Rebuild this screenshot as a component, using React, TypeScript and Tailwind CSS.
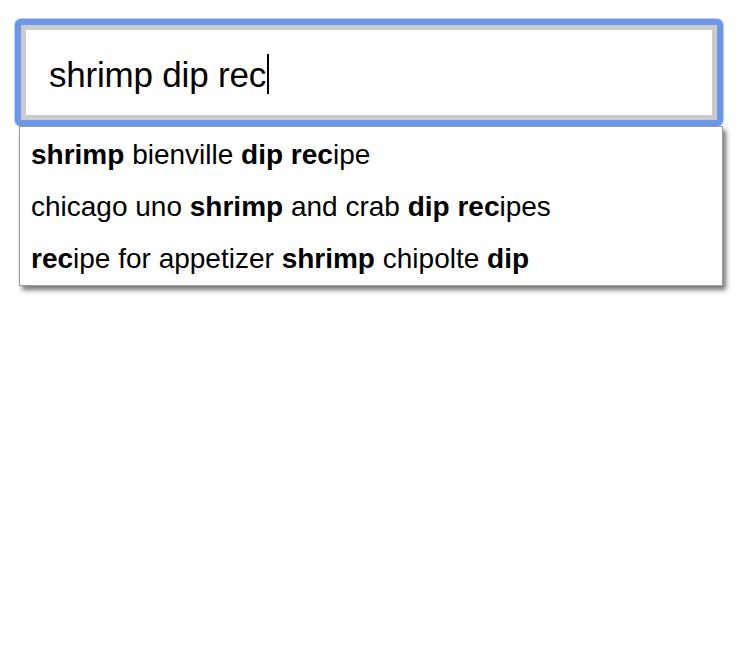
import React from 'react'

type Part = { t: string; b?: boolean }

const suggestions: Part[][] = [
  [{ t: 'shrimp', b: true }, { t: ' bienville ' }, { t: 'dip rec', b: true }, { t: 'ipe' }],
  [{ t: 'chicago uno ' }, { t: 'shrimp', b: true }, { t: ' and crab ' }, { t: 'dip rec', b: true }, { t: 'ipes' }],
  [{ t: 'rec', b: true }, { t: 'ipe for appetizer ' }, { t: 'shrimp', b: true }, { t: ' chipolte ' }, { t: 'dip', b: true }],
]

const App = () => {
  return (
    <div className="min-h-[668px] w-[744px] bg-white pl-[15px] pt-[19px] font-['Liberation_Sans',Arial,sans-serif] text-black">
      <div className="w-[708px] rounded-[6px] bg-[#6c97e9] p-[6px] shadow-[0_0_0_1px_#b7cdf5]">
        <div className="flex h-[95px] items-center border-[5px] border-[#cbcbcb] bg-white pl-[23px] pt-[3px]">
          <span className="text-[35px] leading-none tracking-[-0.2px]">shrimp dip rec</span>
          <span className="ml-[1px] h-[40px] w-[2px] bg-black" />
        </div>
      </div>
      <div className="ml-[4px] w-[704px] border border-[#9a9a9a] bg-white pt-[2px] shadow-[3px_4px_5px_rgba(0,0,0,0.55)]">
        {suggestions.map((row, i) => (
          <div key={i} className="flex h-[52px] items-center pl-[11px] text-[28px] leading-none">
            {row.map((p, j) => (
              <span key={j} className={p.b ? 'whitespace-pre font-bold' : 'whitespace-pre'}>
                {p.t}
              </span>
            ))}
          </div>
        ))}
      </div>
    </div>
  )
}

export default App
